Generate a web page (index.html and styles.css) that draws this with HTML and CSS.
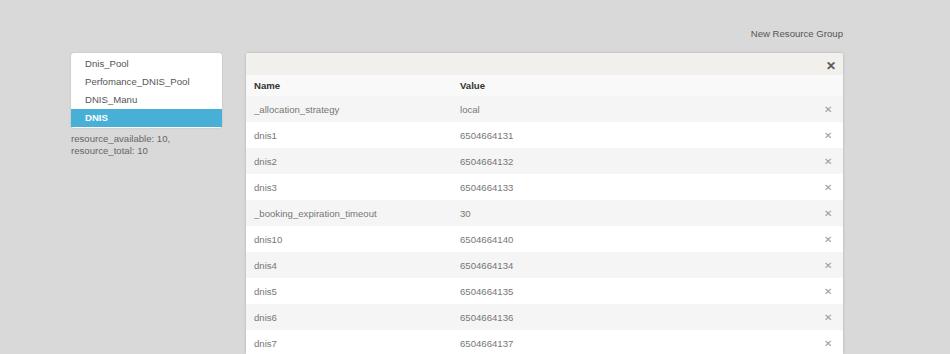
FILE: index.html
```html
<!DOCTYPE html>
<html lang="en">
<head>
<meta charset="utf-8">
<title>Resource Groups</title>
<link rel="stylesheet" href="styles.css">
</head>
<body>
<div class="page">
  <div class="toolbar">
    <a class="new-group" href="#">New Resource Group</a>
  </div>
  <div class="content">
    <aside class="sidebar">
      <ul class="group-list">
        <li>Dnis_Pool</li>
        <li>Perfomance_DNIS_Pool</li>
        <li>DNIS_Manu</li>
        <li class="active">DNIS</li>
      </ul>
      <div class="group-info">resource_available: 10,<br>resource_total: 10</div>
    </aside>
    <section class="panel">
      <div class="panel-head">
        <span class="close">&#x2715;</span>
      </div>
      <table class="props">
        <thead>
          <tr><th class="col-name">Name</th><th>Value</th><th class="col-del"></th></tr>
        </thead>
        <tbody>
          <tr><td>_allocation_strategy</td><td>local</td><td class="col-del">&#x2715;</td></tr>
          <tr><td>dnis1</td><td>6504664131</td><td class="col-del">&#x2715;</td></tr>
          <tr><td>dnis2</td><td>6504664132</td><td class="col-del">&#x2715;</td></tr>
          <tr><td>dnis3</td><td>6504664133</td><td class="col-del">&#x2715;</td></tr>
          <tr><td>_booking_expiration_timeout</td><td>30</td><td class="col-del">&#x2715;</td></tr>
          <tr><td>dnis10</td><td>6504664140</td><td class="col-del">&#x2715;</td></tr>
          <tr><td>dnis4</td><td>6504664134</td><td class="col-del">&#x2715;</td></tr>
          <tr><td>dnis5</td><td>6504664135</td><td class="col-del">&#x2715;</td></tr>
          <tr><td>dnis6</td><td>6504664136</td><td class="col-del">&#x2715;</td></tr>
          <tr><td>dnis7</td><td>6504664137</td><td class="col-del">&#x2715;</td></tr>
        </tbody>
      </table>
    </section>
  </div>
</div>
</body>
</html>
```

FILE: styles.css
```css
* {
  box-sizing: border-box;
}
body {
  margin: 0;
  background: #d9d9d9;
  font-family: "Liberation Sans", Arial, sans-serif;
  font-size: 9.6px;
  color: #777;
  overflow: hidden;
}
.page {
  width: 772px;
  margin-left: 71px;
}
.toolbar {
  display: flex;
  justify-content: flex-end;
  height: 53px;
  padding-top: 28px;
}
.new-group {
  color: #555;
  text-decoration: none;
  font-size: 9.6px;
  line-height: 12px;
}
.content {
  display: flex;
  gap: 24px;
  align-items: flex-start;
}
.sidebar {
  width: 151px;
  flex: none;
}
.group-list {
  list-style: none;
  margin: 0;
  padding: 2px 0 1px;
  background: #fff;
  border-radius: 3px;
  box-shadow: 0 0 2px rgba(0, 0, 0, 0.15);
}
.group-list li {
  height: 18px;
  line-height: 18px;
  padding-left: 14px;
  color: #555;
}
.group-list li.active {
  background: #48b0d6;
  color: #fff;
  font-weight: bold;
}
.group-info {
  margin-top: 5px;
  line-height: 12px;
  color: #666;
}
.panel {
  flex: 1;
  height: 301px;
  background: #fff;
  border-radius: 3px 3px 0 0;
  box-shadow: 0 0 3px rgba(0, 0, 0, 0.2);
  overflow: hidden;
}
.panel-head {
  height: 22px;
  background: #f1f0ed;
  display: flex;
  justify-content: flex-end;
  align-items: center;
  padding-right: 7px;
}
.close {
  font-size: 12px;
  color: #555;
  line-height: 12px;
  margin-top: 4px;
  -webkit-text-stroke: 0.5px #555;
}
.props {
  width: 100%;
  border-collapse: collapse;
}
.props th {
  height: 21px;
  text-align: left;
  padding: 0 8px;
  color: #333;
  font-weight: bold;
  background: #f9f9f9;
}
.props td {
  height: 26px;
  padding: 0 8px;
  color: #777;
}
.props tbody tr:nth-child(odd) td {
  background: #f5f5f5;
}
.props .col-name {
  width: 206px;
}
.props .col-del {
  width: 30px;
  text-align: right;
  color: #9a9a9a;
  font-size: 10px;
  padding: 0 11px 0 0;
}
```
